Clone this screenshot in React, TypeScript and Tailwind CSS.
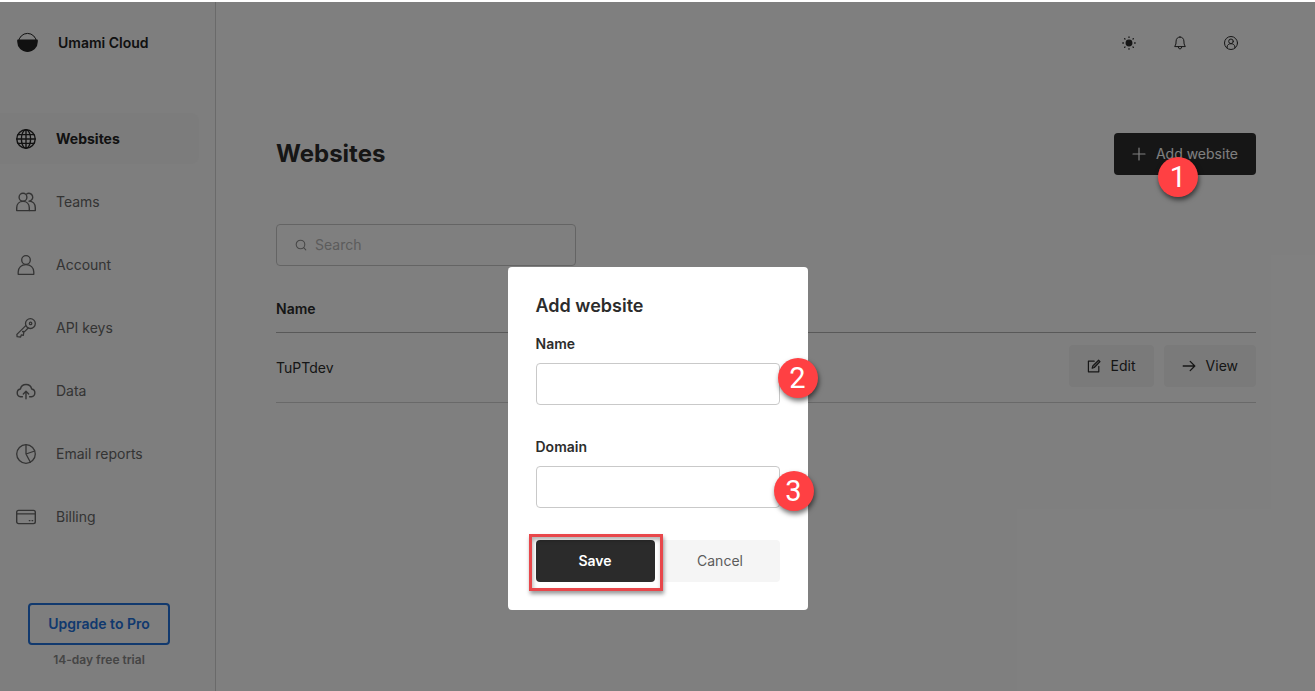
import React from "react";

type IconProps = { className?: string };

const line = {
  fill: "none",
  stroke: "currentColor",
  strokeLinecap: "round" as const,
  strokeLinejoin: "round" as const,
  "aria-hidden": true,
};

const Logo = () => (
  <svg viewBox="0 0 22 22" className="h-[22px] w-[22px]" aria-hidden="true">
    <circle cx="10.5" cy="10.3" r="8.9" fill="none" stroke="#222" strokeWidth="1" />
    <path d="M.2 8.4Q.2 7.6 1 7.6H20Q20.8 7.6 20.8 8.4V9.8A10.3 10.3 0 0 1 .2 9.8Z" fill="#222" />
  </svg>
);

const Globe = ({ className }: IconProps) => (
  <svg viewBox="0 0 20 20" strokeWidth="1.4" className={className} {...line}>
    <circle cx="10" cy="10" r="9.2" />
    <ellipse cx="10" cy="10" rx="4.6" ry="9.2" />
    <path d="M10 .8V19.2M.8 10H19.2M2 5.6H18M2 14.4H18" />
  </svg>
);

const Users = ({ className }: IconProps) => (
  <svg viewBox="0 0 20 20" strokeWidth="1.4" className={className} {...line}>
    <circle cx="7" cy="5.2" r="3.9" />
    <path d="M.7 18.6V15.8C.7 12 3.4 9.4 7 9.4s6.3 2.6 6.3 6.4v2.8Z" />
    <path d="M10.6 2A3.9 3.9 0 1 1 13 9.1C16.8 9.2 19.3 12 19.3 15.8V18.6H13.3" />
  </svg>
);

const User = ({ className }: IconProps) => (
  <svg viewBox="0 0 20 20" strokeWidth="1.3" className={className} {...line}>
    <circle cx="10" cy="5" r="4.3" />
    <path d="M2.2 19.3V17C2.2 12.5 5.5 9.6 10 9.6s7.8 2.9 7.8 7.4v2.3Z" />
  </svg>
);

const Key = ({ className }: IconProps) => (
  <svg viewBox="0 0 20 20" strokeWidth="1.3" className={className} {...line}>
    <circle cx="14.4" cy="5.6" r="4.9" />
    <circle cx="14.6" cy="5.4" r="1.2" />
    <path d="M9.8 7.6 .9 16.4 1.1 18.7 4.6 19 5.3 16.9 7.3 17.3 7.8 14.5 6.6 13.4 8.6 13.6 12.2 10" />
  </svg>
);

const Cloud = ({ className }: IconProps) => (
  <svg viewBox="0 0 20 20" strokeWidth="1.4" className={className} {...line}>
    <path d="M6.4 15.7H4.6A3.9 3.9 0 0 1 4.4 8 5.8 5.8 0 0 1 15.7 8 3.9 3.9 0 0 1 15.4 15.7H13.6" />
    <path d="M10 17.7V10.6M7.3 13 10 10.3 12.7 13" />
  </svg>
);

const Pie = ({ className }: IconProps) => (
  <svg viewBox="0 0 20 20" strokeWidth="1.3" className={className} {...line}>
    <circle cx="10" cy="10" r="9.3" />
    <path d="M10 .7V10L18.7 7M10 10 14.4 18.2" />
  </svg>
);

const Card = ({ className }: IconProps) => (
  <svg viewBox="0 0 20 20" strokeWidth="1.4" className={className} {...line}>
    <rect x=".7" y="3.4" width="18.6" height="13.2" rx="1.8" />
    <path d="M.7 6.9H19.3" />
    <path d="M13.2 13.6H14M16 13.6H16.8" strokeWidth="1.1" />
  </svg>
);

const Sun = () => (
  <svg viewBox="0 0 14 14" strokeWidth="1.3" className="h-3.5 w-3.5" {...line}>
    <circle cx="7" cy="7" r="2.8" fill="currentColor" />
    <path d="M7 .8v.6M7 12.6v.6M.8 7h.6M12.6 7h.6M2.6 2.6l.4.4M11 11l.4.4M2.6 11.4l.4-.4M11 3l.4-.4" />
  </svg>
);

const Bell = () => (
  <svg viewBox="0 0 14 14" strokeWidth="1" className="h-3.5 w-3.5" {...line}>
    <path d="M7 1C4.6 1 3.2 2.8 3.1 5L2.9 8 1.7 10.6H12.3L11.1 8 10.9 5C10.8 2.8 9.4 1 7 1ZM5.2 11Q5.6 13 7 13T8.8 11" />
  </svg>
);

const Profile = () => (
  <svg viewBox="0 0 14 14" strokeWidth="1" className="h-3.5 w-3.5" {...line}>
    <circle cx="7" cy="7" r="6.5" />
    <circle cx="7" cy="5.3" r="2.3" />
    <path d="M3.1 11.9V11C3.1 9 4.8 7.7 7 7.7S10.9 9 10.9 11V11.9" />
  </svg>
);

const Plus = () => (
  <svg viewBox="0 0 14 14" strokeWidth="1.2" className="h-3.5 w-3.5" {...line}>
    <path d="M7 1V13M1 7H13" />
  </svg>
);

const Search = () => (
  <svg viewBox="0 0 12 12" strokeWidth="1.1" className="h-3 w-3 shrink-0 text-[#8e8e8e]" {...line}>
    <circle cx="5.5" cy="5.5" r="4.3" />
    <path d="M8.7 8.7 10.8 10.8" />
  </svg>
);

const Edit = () => (
  <svg viewBox="0 0 14 14" strokeWidth="1.2" className="h-3.5 w-3.5" {...line}>
    <path d="M7.2 2.2H1.4V12.8H11.8V7.4" />
    <path d="M5.2 9.2 5.8 6.9 11.6 1.2 13 2.6 7.3 8.5Z" fill="currentColor" fillOpacity=".4" />
  </svg>
);

const Arrow = () => (
  <svg viewBox="0 0 14 14" strokeWidth="1.3" className="h-3.5 w-3.5" {...line}>
    <path d="M1.2 7H12.6M8.2 2.4 12.8 7 8.2 11.6" />
  </svg>
);

const navItems = [
  { label: "Websites", Icon: Globe, active: true },
  { label: "Teams", Icon: Users },
  { label: "Account", Icon: User },
  { label: "API keys", Icon: Key },
  { label: "Data", Icon: Cloud },
  { label: "Email reports", Icon: Pie },
  { label: "Billing", Icon: Card },
];

function Step({ value, className }: { value: number; className: string }) {
  return (
    <span
      className={`absolute z-30 flex h-10 w-10 items-center justify-center rounded-full bg-[#ff4043] font-[Roboto,sans-serif] text-[29px] leading-none text-white shadow-[1px_3px_5px_rgba(0,0,0,0.55)] ${className}`}
    >
      {value}
    </span>
  );
}

function Sidebar() {
  return (
    <aside className="flex w-[216px] shrink-0 flex-col border-r border-[#d4d4d4] bg-[#fcfcfc]">
      <a href="#home" className="flex h-[82px] items-center gap-[19px] pl-[17px] font-semibold text-[#222]">
        <Logo />
        Umami Cloud
      </a>
      <nav className="mt-[29px] flex flex-col gap-3 pr-4">
        {navItems.map(({ label, Icon, active }) => (
          <a
            key={label}
            href="#nav"
            className={`flex h-[51px] items-center gap-5 rounded-r-lg pl-4 ${
              active ? "bg-[#f8f8f8] font-bold text-[#242424]" : "text-[#686868]"
            }`}
          >
            <Icon className="h-5 w-5" />
            {label}
          </a>
        ))}
      </nav>
      <div className="mt-auto flex flex-col items-center gap-[5px] pr-[17px] pb-[21px]">
        <button className="h-[42px] w-[142px] rounded border-2 border-[#2272dc] font-semibold text-[#2272dc]">
          Upgrade to Pro
        </button>
        <p className="text-xs leading-5 font-semibold text-[#8a8a8a]">14-day free trial</p>
      </div>
    </aside>
  );
}

function AddWebsiteDialog() {
  return (
    <div className="absolute inset-0 z-20 flex items-start justify-center pt-[265px]">
      <form
        role="dialog"
        aria-labelledby="dialog-title"
        onSubmit={(e) => e.preventDefault()}
        className="w-[300px] rounded bg-white p-7 text-[#2c2c2c]"
      >
        <h2 id="dialog-title" className="text-lg leading-[22px] font-semibold">
          Add website
        </h2>
        <div className="mt-[17px]">
          <label htmlFor="name" className="block font-semibold">
            Name
          </label>
          <div className="relative mt-[9px]">
            <input id="name" className="block h-[42px] w-full rounded border border-[#c9c9c9] px-4 outline-none" />
            <Step value={2} className="-top-[5px] -right-[38px]" />
          </div>
        </div>
        <div className="mt-8">
          <label htmlFor="domain" className="block font-semibold">
            Domain
          </label>
          <div className="relative mt-[9px]">
            <input id="domain" className="block h-[42px] w-full rounded border border-[#c9c9c9] px-4 outline-none" />
            <Step value={3} className="top-[5px] -right-[34px]" />
          </div>
        </div>
        <div className="mt-8 flex gap-1.5">
          <div className="relative flex-1">
            <button type="submit" className="h-[42px] w-full rounded bg-[#2b2b2b] font-semibold text-white">
              Save
            </button>
            <span className="pointer-events-none absolute -top-1.5 -right-2 -bottom-[9px] -left-[7px] border-[3px] border-[#e8474b] shadow-[1px_3px_4px_rgba(0,0,0,0.4),inset_1px_3px_4px_rgba(0,0,0,0.3)]" />
          </div>
          <button type="button" className="h-[42px] flex-1 rounded bg-[#f5f5f5] text-[#5c5c5c]">
            Cancel
          </button>
        </div>
      </form>
    </div>
  );
}

export default function App() {
  return (
    <div className="min-h-screen bg-white pt-0.5 font-[Inter,sans-serif] text-sm leading-5 text-[#2c2c2c]">
      <div className="relative flex min-h-[calc(100vh-2px)]">
        <Sidebar />
        <main className="min-w-0 flex-1 pr-[59px] pl-[60px]">
          <header className="flex h-[82px] items-center justify-end">
            <button aria-label="Theme" className="flex h-[42px] w-[51px] items-center justify-center">
              <Sun />
            </button>
            <button aria-label="Notifications" className="flex h-[42px] w-[51px] items-center justify-center">
              <Bell />
            </button>
            <button aria-label="Profile" className="flex h-[42px] w-[51px] items-center justify-center">
              <Profile />
            </button>
          </header>

          <div className="mt-[49px] flex items-center justify-between">
            <h1 className="text-2xl leading-[34px] font-bold">Websites</h1>
            <div className="relative">
              <button className="flex h-[42px] items-center gap-2.5 rounded bg-[#2c2c2c] px-[18px] text-white">
                <Plus />
                Add website
              </button>
              <Step value={1} className="top-6 left-11" />
            </div>
          </div>

          <label className="mt-[49px] flex h-[42px] w-[300px] items-center gap-2 rounded border border-[#c9c9c9] px-[18px]">
            <Search />
            <input
              type="text"
              aria-label="Search"
              placeholder="Search"
              className="min-w-0 flex-1 bg-transparent outline-none placeholder:text-[#b8b8b8]"
            />
          </label>

          <table className="w-full border-collapse">
            <thead>
              <tr className="border-b border-[#b3b3b3]">
                <th className="pt-[33px] pb-[13px] text-left font-semibold">Name</th>
                <th aria-label="Actions" />
              </tr>
            </thead>
            <tbody>
              <tr className="border-b border-[#d2d2d2]">
                <td>TuPTdev</td>
                <td className="pt-3 pb-[15px]">
                  <div className="flex justify-end gap-2.5">
                    <button className="flex h-[42px] items-center gap-2.5 rounded bg-[#f5f5f5] px-[18px]">
                      <Edit />
                      Edit
                    </button>
                    <button className="flex h-[42px] items-center gap-2.5 rounded bg-[#f5f5f5] px-[18px]">
                      <Arrow />
                      View
                    </button>
                  </div>
                </td>
              </tr>
            </tbody>
          </table>
        </main>
        <div className="absolute inset-0 z-10 bg-black/50" />
        <AddWebsiteDialog />
      </div>
    </div>
  );
}
